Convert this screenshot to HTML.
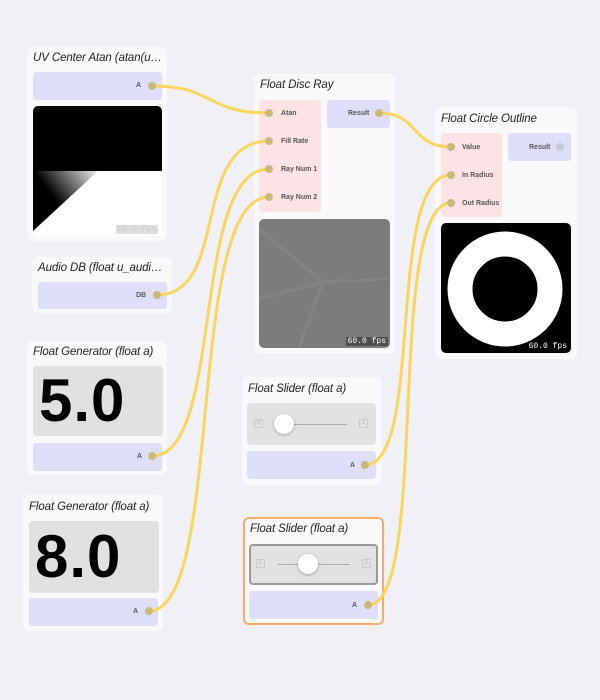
<!DOCTYPE html>
<html><head><meta charset="utf-8"><style>
*{box-sizing:border-box;margin:0;padding:0}
body{width:600px;height:700px;background:#f1f0f6;position:relative;overflow:hidden;font-family:"Liberation Sans",sans-serif}
.n{position:absolute;background:#f9f9fc;border-radius:6px}
.t{position:absolute;font-style:italic;font-size:11.5px;color:#222;white-space:nowrap;letter-spacing:-0.1px}
.b{position:absolute;border-radius:3px}
.lav{background:#e0dffb}
.pink{background:#fde3e6}
.lbl{position:absolute;font-size:7px;font-weight:bold;color:#555}
.big{position:absolute;background:#e1e1e3;border-radius:4px;font-weight:bold;font-size:60px;color:#000;letter-spacing:1px}
.fps{position:absolute;font-family:"Liberation Mono",monospace;font-size:8px;color:#fff;background:rgba(60,60,60,.7);padding:0 2px}
.sl{position:absolute;background:#e2e2e4;border-radius:4px}
.knob{position:absolute;width:20px;height:20px;border-radius:50%;background:#fff;box-shadow:0 1px 3px rgba(0,0,0,.3)}
.tr{position:absolute;height:1px;background:#aaa}
.sq{position:absolute;width:9px;height:9px;border:1px solid #ccc;font-size:6px;color:#bbb;text-align:center;line-height:7px}
</style></head><body>

<div class="n" style="left:27px;top:47px;width:140px;height:194px"></div>
<div class="t" style="left:33px;top:52px">UV Center Atan (atan(u…</div>
<div class="b lav" style="left:33px;top:72px;width:129px;height:28px"></div>
<div class="lbl" style="left:136px;top:82px">A</div>
<div class="b" style="left:33px;top:106px;width:129px;height:130px;border-radius:5px;overflow:hidden;background:#fff">
<svg width="129" height="130"><defs><linearGradient id="g" x1="0" y1="0" x2="0.7" y2="-0.5"><stop offset="0" stop-color="#000"/><stop offset="1" stop-color="#fff"/></linearGradient></defs>
<rect width="129" height="65" fill="#000"/><polygon points="0,65 65,65 0,125" fill="url(#g)"/></svg>
<div class="fps" style="right:4px;bottom:2px;color:#ccc;background:#ddd">60.0 fps</div></div>

<div class="n" style="left:32px;top:257px;width:140px;height:56px"></div>
<div class="t" style="left:38px;top:262px">Audio DB (float u_audi…</div>
<div class="b lav" style="left:38px;top:282px;width:129px;height:27px"></div>
<div class="lbl" style="left:136px;top:292px">DB</div>

<div class="n" style="left:27px;top:341px;width:140px;height:134px"></div>
<div class="t" style="left:33px;top:346px">Float Generator (float a)</div>
<div class="big" style="left:33px;top:366px;width:130px;height:70px;padding-left:6px;line-height:70px">5.0</div>
<div class="b lav" style="left:33px;top:443px;width:129px;height:28px"></div>
<div class="lbl" style="left:137px;top:453px">A</div>

<div class="n" style="left:23px;top:495px;width:140px;height:136px"></div>
<div class="t" style="left:29px;top:501px">Float Generator (float a)</div>
<div class="big" style="left:29px;top:521px;width:130px;height:72px;padding-left:6px;line-height:72px">8.0</div>
<div class="b lav" style="left:29px;top:598px;width:129px;height:28px"></div>
<div class="lbl" style="left:133px;top:608px">A</div>

<div class="n" style="left:254px;top:74px;width:141px;height:280px"></div>
<div class="t" style="left:260px;top:79px">Float Disc Ray</div>
<div class="b pink" style="left:259px;top:100px;width:62px;height:112px"></div>
<div class="lbl" style="left:281px;top:110px">Atan</div>
<div class="lbl" style="left:281px;top:138px">Fill Rate</div>
<div class="lbl" style="left:281px;top:166px">Ray Num 1</div>
<div class="lbl" style="left:281px;top:194px">Ray Num 2</div>
<div class="b lav" style="left:327px;top:100px;width:63px;height:28px"></div>
<div class="lbl" style="left:348px;top:110px">Result</div>
<div class="b" style="left:259px;top:219px;width:131px;height:129px;background:#7c7c7c;border-radius:5px;overflow:hidden">
<svg width="131" height="129"><g stroke="#8a8a8a" stroke-width="3" opacity=".5"><line x1="64" y1="63" x2="0" y2="10"/><line x1="64" y1="63" x2="131" y2="60"/><line x1="64" y1="63" x2="40" y2="129"/><line x1="64" y1="63" x2="0" y2="80"/></g></svg>
<div class="fps" style="right:2px;bottom:2px">60.0 fps</div></div>

<div class="n" style="left:435px;top:107px;width:142px;height:252px"></div>
<div class="t" style="left:441px;top:113px">Float Circle Outline</div>
<div class="b pink" style="left:441px;top:133px;width:61px;height:84px"></div>
<div class="lbl" style="left:462px;top:144px">Value</div>
<div class="lbl" style="left:462px;top:172px">In Radius</div>
<div class="lbl" style="left:462px;top:200px">Out Radius</div>
<div class="b lav" style="left:508px;top:133px;width:63px;height:28px"></div>
<div class="lbl" style="left:529px;top:144px">Result</div>
<div class="b" style="left:441px;top:223px;width:130px;height:130px;background:#000;border-radius:5px;overflow:hidden">
<svg width="130" height="130"><circle cx="64" cy="66" r="45" fill="none" stroke="#fff" stroke-width="25"/></svg>
<div class="fps" style="right:2px;bottom:2px;background:none">60.0 fps</div></div>

<div class="n" style="left:242px;top:377px;width:140px;height:108px"></div>
<div class="t" style="left:248px;top:383px">Float Slider (float a)</div>
<div class="sl" style="left:247px;top:403px;width:129px;height:42px"></div>
<div class="sq" style="left:254px;top:419px">0</div>
<div class="sq" style="left:359px;top:419px">1</div>
<div class="tr" style="left:280px;top:424px;width:67px"></div>
<div class="knob" style="left:274px;top:414px"></div>
<div class="b lav" style="left:247px;top:451px;width:129px;height:28px"></div>
<div class="lbl" style="left:350px;top:462px">A</div>

<div class="n" style="left:243px;top:517px;width:141px;height:108px;border:2px solid #f6ac68"></div>
<div class="t" style="left:250px;top:523px">Float Slider (float a)</div>
<div class="sl" style="left:249px;top:544px;width:129px;height:41px;border:2px solid #999"></div>
<div class="sq" style="left:256px;top:559px">0</div>
<div class="sq" style="left:362px;top:559px">1</div>
<div class="tr" style="left:278px;top:564px;width:72px"></div>
<div class="knob" style="left:298px;top:554px"></div>
<div class="b lav" style="left:249px;top:591px;width:129px;height:28px"></div>
<div class="lbl" style="left:352px;top:602px">A</div>

<svg style="position:absolute;left:0;top:0" width="600" height="700">
<g fill="none" stroke="#f8d55c" stroke-width="3" stroke-linecap="round">
<path d="M152 86 C215 86 205 113 269 113"/>
<path d="M157 295 C230 295 190 141 269 141"/>
<path d="M152 456 C225 456 190 169 269 169"/>
<path d="M149 611 C225 611 185 197 269 197"/>
<path d="M379 113 C420 113 410 147 451 147"/>
<path d="M365 465 C425 465 385 175 451 175"/>
<path d="M368 605 C430 605 385 203 451 203"/>
</g>
<g fill="#c9b97a">
<circle cx="152" cy="86" r="4"/><circle cx="157" cy="295" r="4"/><circle cx="152" cy="456" r="4"/><circle cx="149" cy="611" r="4"/>
<circle cx="269" cy="113" r="4"/><circle cx="269" cy="141" r="4"/><circle cx="269" cy="169" r="4"/><circle cx="269" cy="197" r="4"/>
<circle cx="379" cy="113" r="4"/><circle cx="451" cy="147" r="4"/><circle cx="451" cy="175" r="4"/><circle cx="451" cy="203" r="4"/>
<circle cx="365" cy="465" r="4"/><circle cx="368" cy="605" r="4"/>
<circle cx="560" cy="147" r="4" fill="#c8c8d4"/>
</g></svg>
</body></html>
